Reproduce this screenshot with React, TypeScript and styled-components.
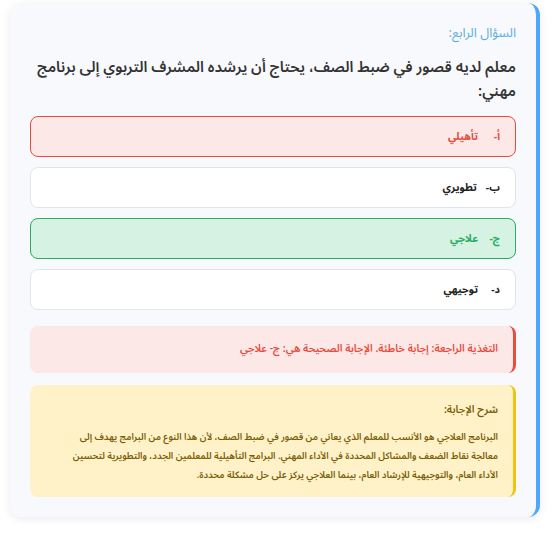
import React from "react"
import styled, { createGlobalStyle } from "styled-components"

const GlobalStyle = createGlobalStyle`
  body {
    margin: 0;
    background: #ffffff;
    font-family: "Noto Sans Arabic", "Noto Sans", sans-serif;
  }
`

const Page = styled.div`
  padding: 3px 12px 14px 10px;
`

const Card = styled.div`
  direction: rtl;
  background: #f8f9fd;
  border-right: 4px solid #4da6ff;
  border-radius: 12px;
  box-shadow: 0 2px 10px rgba(0, 0, 0, 0.08);
  padding: 20px 20px 20px 20px;
`

const Label = styled.div`
  color: #5dade2;
  font-size: 13px;
  line-height: 20px;
  margin-bottom: 12px;
`

const Question = styled.div`
  color: #333;
  font-size: 15px;
  font-weight: 600;
  line-height: 24px;
  margin-bottom: 13px;
`

const Options = styled.div`
  display: flex;
  flex-direction: column;
  gap: 10px;
`

type Status = "wrong" | "correct" | "plain"

const optionColors: Record<Status, { bg: string; border: string; text: string }> = {
  wrong: { bg: "#fde8e8", border: "#e74c3c", text: "#e74c3c" },
  correct: { bg: "#d5f2e3", border: "#27ae60", text: "#27ae60" },
  plain: { bg: "#ffffff", border: "#e0e4ec", text: "#222" },
}

const Option = styled.div<{ $status: Status }>`
  display: flex;
  align-items: center;
  gap: 9px;
  height: 39px;
  padding: 0 15px;
  border-radius: 8px;
  background: ${({ $status }) => optionColors[$status].bg};
  border: 1px solid ${({ $status }) => optionColors[$status].border};
  color: ${({ $status }) => optionColors[$status].text};
  font-size: 10.5px;
  font-weight: 700;
`

const Letter = styled.span`
  min-width: 13px;
`

const Feedback = styled.div`
  margin-top: 16px;
  background: #fde8e8;
  border-right: 3px solid #e74c3c;
  border-radius: 8px;
  padding: 14px 15px;
  line-height: 19px;
  color: #e74c3c;
  font-size: 10.5px;
  font-weight: 650;
`

const Explanation = styled.div`
  margin-top: 12px;
  background: #fff2c9;
  border-right: 3px solid #f1c40f;
  border-radius: 8px;
  padding: 15px 15px 12px 22px;
  color: #7a5c06;
  font-size: 9.3px;
  font-weight: 650;
`

const ExplTitle = styled.div`
  font-size: 10.5px;
  line-height: 20px;
  margin-bottom: 8px;
`

const ExplText = styled.p`
  margin: 0;
  line-height: 19px;
`

const options: { letter: string; text: string; status: Status }[] = [
  { letter: "أ-", text: "تأهيلي", status: "wrong" },
  { letter: "ب-", text: "تطويري", status: "plain" },
  { letter: "ج-", text: "علاجي", status: "correct" },
  { letter: "د-", text: "توجيهي", status: "plain" },
]

export default function App() {
  return (
    <>
      <GlobalStyle />
      <Page>
        <Card>
          <Label>السؤال الرابع:</Label>
          <Question>معلم لديه قصور في ضبط الصف، يحتاج أن يرشده المشرف التربوي إلى برنامج مهني:</Question>
          <Options>
            {options.map((o) => (
              <Option key={o.letter} $status={o.status}>
                <Letter>{o.letter}</Letter>
                <span>{o.text}</span>
              </Option>
            ))}
          </Options>
          <Feedback>التغذية الراجعة: إجابة خاطئة. الإجابة الصحيحة هي: ج- علاجي</Feedback>
          <Explanation>
            <ExplTitle>شرح الإجابة:</ExplTitle>
            <ExplText>
              البرنامج العلاجي هو الأنسب للمعلم الذي يعاني من قصور في ضبط الصف، لأن هذا النوع من البرامج يهدف إلى معالجة نقاط الضعف والمشاكل المحددة في الأداء المهني. البرامج التأهيلية للمعلمين الجدد، والتطويرية لتحسين الأداء العام، والتوجيهية للإرشاد العام، بينما العلاجي يركز على حل مشكلة محددة.
            </ExplText>
          </Explanation>
        </Card>
      </Page>
    </>
  )
}
